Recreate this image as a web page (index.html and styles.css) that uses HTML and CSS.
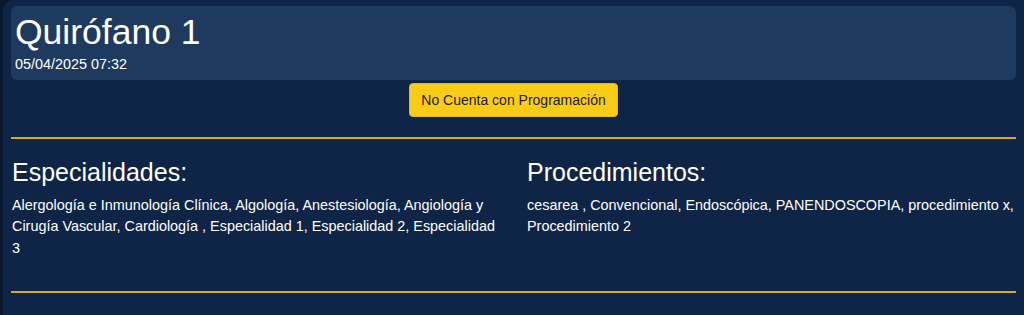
FILE: index.html
```html
<!DOCTYPE html>
<html lang="es">
<head>
<meta charset="UTF-8">
<title>Quirófano 1</title>
<link rel="stylesheet" href="styles.css">
</head>
<body>

<div class="room-card">

  <header class="room-header">
    <h1 class="room-name">Quirófano 1</h1>
    <div class="room-date">05/04/2025 07:32</div>
  </header>

  <div class="status-row">
    <span class="status-badge">No Cuenta con Programación</span>
  </div>

  <hr class="divider">

  <section class="room-details">
    <div class="detail-col">
      <h2 class="detail-title">Especialidades:</h2>
      <p class="detail-text">Alergología e Inmunología Clínica, Algología, Anestesiología, Angiología y Cirugía Vascular, Cardiología , Especialidad 1, Especialidad 2, Especialidad 3</p>
    </div>
    <div class="detail-col">
      <h2 class="detail-title">Procedimientos:</h2>
      <p class="detail-text">cesarea , Convencional, Endoscópica, PANENDOSCOPIA, procedimiento x, Procedimiento 2</p>
    </div>
  </section>

  <hr class="divider divider-bottom">

</div>

</body>
</html>
```

FILE: styles.css
```css
* { margin: 0; padding: 0; box-sizing: border-box; }
body { font-family: "Liberation Sans", Arial, sans-serif; background-color: #0a1830; color: #fff; }
.room-card { margin-left: 3px; min-height: 315px; padding: 6px 8px 20px; background-color: #0f2548; border-radius: 10px 0 0 0; }
.room-header { padding: 5px 4px 7px; background-color: #1e3a5f; border-radius: 6px; }
.room-name { font-size: 35.5px; font-weight: normal; line-height: 42px; }
.room-date { margin-top: 2px; font-size: 0.9rem; line-height: 18px; }
.status-row { display: flex; justify-content: center; padding-top: 3px; }
.status-badge { display: inline-block; padding: 6px 11px; font-size: 14px; line-height: 20px; color: #1c1c1c; background-color: #facc15; border: 1px solid #e6b90f; border-radius: 4px; }
.divider { margin-top: 20px; border: none; border-top: 2px solid #d3ab1e; }
.divider-bottom { margin-top: 32px; }
.room-details { display: grid; grid-template-columns: 1fr 1fr; gap: 27px; padding: 18px 1px 0; }
.detail-title { font-size: 25px; font-weight: normal; line-height: 30px; }
.detail-text { margin-top: 8px; font-size: 0.9rem; line-height: 21.3px; }
```
